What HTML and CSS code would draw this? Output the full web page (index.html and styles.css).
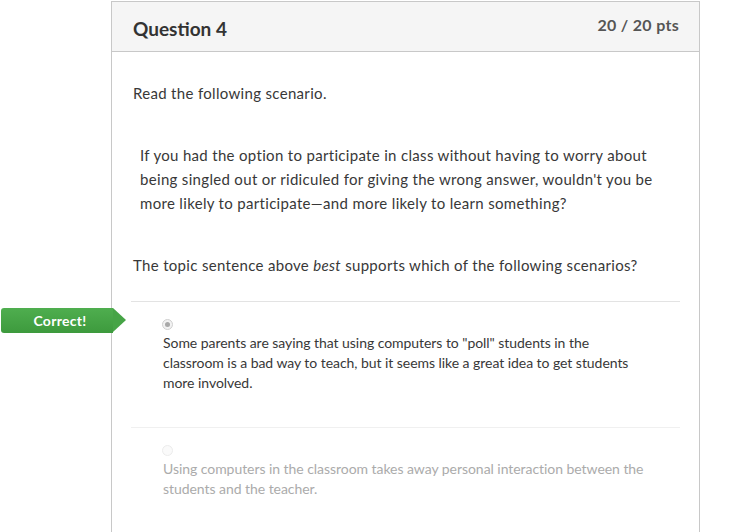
FILE: index.html
```html
<!DOCTYPE html>
<html>
<head>
<meta charset="utf-8">
<link rel="stylesheet" href="styles.css">
</head>
<body>
<div class="card">
  <div class="card-header">
    <h2 class="title">Question 4</h2>
    <div class="pts">20 / 20 pts</div>
  </div>
  <div class="card-body">
    <p class="lead">Read the following scenario.</p>
    <p class="quote">If you had the option to participate in class without having to worry about being singled out or ridiculed for giving the wrong answer, wouldn't you be more likely to participate—and more likely to learn something?</p>
    <p class="prompt">The topic sentence above <em>best</em> supports which of the following scenarios?</p>
    <div class="answers">
      <div class="answer selected">
        <div class="badge">Correct!</div>
        <span class="radio checked"></span>
        <div class="answer-text">Some parents are saying that using computers to "poll" students in the classroom is a bad way to teach, but it seems like a great idea to get students more involved.</div>
      </div>
      <div class="answer dim">
        <span class="radio"></span>
        <div class="answer-text">Using computers in the classroom takes away personal interaction between the students and the teacher.</div>
      </div>
    </div>
  </div>
</div>
</body>
</html>
```
FILE: styles.css
```css
html, body {
  margin: 0;
  padding: 0;
  background: #fff;
}
body {
  font-family: Lato, "Open Sans", sans-serif;
  color: #333;
  overflow: hidden;
}
.card {
  margin: 1px 0 0 111px;
  width: 587px;
  min-height: calc(100vh - 2px);
  border: 1px solid #c8c8c8;
  border-bottom: none;
}
.card-header {
  height: 49px;
  background: #f5f5f5;
  border-bottom: 1px solid #c8c8c8;
  display: flex;
  justify-content: space-between;
  padding: 0 20px 0 21px;
}
.title {
  margin: 0;
  font-size: 19px;
  font-weight: 700;
  color: #333;
  line-height: 24px;
  padding-top: 15px;
}
.pts {
  font-size: 16px;
  font-weight: 700;
  color: #555;
  line-height: 20px;
  padding-top: 13px;
  letter-spacing: 0.3px;
}
.card-body {
  padding: 29px 19px 0 19px;
}
.card-body p {
  margin: 0;
  font-size: 15px;
  line-height: 24px;
  padding-left: 2px;
  letter-spacing: 0.32px;
  color: #383838;
}
.quote {
  margin-top: 38px !important;
  padding-left: 9px !important;
  padding-right: 14px;
}
.prompt {
  margin-top: 38px !important;
}
.answers {
  margin-top: 24px;
}
.answer {
  position: relative;
  border-top: 1px solid #e3e3e3;
  padding: 17px 0 34px 32px;
}
.answer.dim {
  border-top-color: #f0f0f0;
  padding-bottom: 20px;
}
.radio {
  display: block;
  width: 9px;
  height: 9px;
  margin-left: -1px;
  border: 1px solid #d0d0d0;
  border-radius: 50%;
  background: #f2f2f2;
  position: relative;
}
.radio.checked::after {
  content: "";
  position: absolute;
  left: 2px;
  top: 2px;
  width: 5px;
  height: 5px;
  border-radius: 50%;
  background: #a8a8a8;
}
.dim .radio {
  border-color: #ececec;
  background: #fafafa;
}
.answer-text {
  margin-top: 3px;
  font-size: 14px;
  line-height: 20px;
  color: #383838;
  max-width: 480px;
  letter-spacing: -0.05px;
}
.dim .answer-text {
  color: #ababab;
  max-width: 500px;
}
.badge {
  position: absolute;
  left: -130px;
  top: 6px;
  width: 106px;
  padding-left: 6px;
  height: 25px;
  line-height: 25px;
  background: linear-gradient(#4fae4f, #3d9a3d);
  color: #fff;
  font-size: 14px;
  font-weight: 700;
  letter-spacing: 0.3px;
  text-align: center;
  border-radius: 3px 0 0 3px;
}
.badge::after {
  content: "";
  position: absolute;
  right: -13px;
  top: 0;
  border-top: 12.5px solid transparent;
  border-bottom: 12.5px solid transparent;
  border-left: 13px solid #46a446;
}
```
